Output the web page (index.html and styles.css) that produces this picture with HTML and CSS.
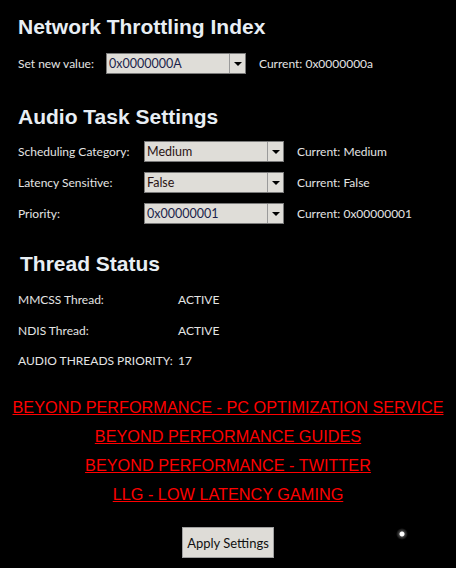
FILE: index.html
```html
<!DOCTYPE html>
<html>
<head>
<meta charset="utf-8">
<link rel="stylesheet" href="styles.css">
</head>
<body>
<div class="panel">
  <h2 class="heading">Network Throttling Index</h2>
  <div class="net-row">
    <span class="label net-label">Set new value:</span>
    <div class="combo"><span class="combo-text">0x0000000A</span><span class="combo-btn"><span class="arrow"></span></span></div>
    <span class="label current">Current: 0x0000000a</span>
  </div>

  <h2 class="heading audio-heading">Audio Task Settings</h2>
  <div class="audio-grid">
    <span class="label">Scheduling Category:</span>
    <div class="combo"><span class="combo-text red">Medium</span><span class="combo-btn"><span class="arrow"></span></span></div>
    <span class="label">Current: Medium</span>

    <span class="label">Latency Sensitive:</span>
    <div class="combo"><span class="combo-text red">False</span><span class="combo-btn"><span class="arrow"></span></span></div>
    <span class="label">Current: False</span>

    <span class="label">Priority:</span>
    <div class="combo"><span class="combo-text">0x00000001</span><span class="combo-btn"><span class="arrow"></span></span></div>
    <span class="label">Current: 0x00000001</span>
  </div>

  <h2 class="heading thread-heading">Thread Status</h2>
  <div class="thread-grid">
    <span class="label">MMCSS Thread:</span><span class="label">ACTIVE</span>
    <span class="label">NDIS Thread:</span><span class="label">ACTIVE</span>
    <span class="label">AUDIO THREADS PRIORITY:</span><span class="label">17</span>
  </div>

  <div class="links">
    <a class="link" href="#">BEYOND PERFORMANCE - PC OPTIMIZATION SERVICE</a>
    <a class="link" href="#">BEYOND PERFORMANCE GUIDES</a>
    <a class="link" href="#">BEYOND PERFORMANCE - TWITTER</a>
    <a class="link" href="#">LLG - LOW LATENCY GAMING</a>
  </div>

  <div class="actions">
    <button class="apply">Apply Settings</button>
  </div>
  <span class="glow"></span>
</div>
</body>
</html>
```

FILE: styles.css
```css
html, body {
  margin: 0;
  padding: 0;
  background: #000;
}
body {
  width: 456px;
  height: 568px;
  overflow: hidden;
}
.panel {
  position: relative;
  height: 568px;
  box-sizing: border-box;
  padding: 15px 0 0 18px;
  font-family: Lato, "Open Sans", sans-serif;
  color: #e6e6e6;
}
.heading {
  margin: 0;
  font-family: "Liberation Sans", Arial, sans-serif;
  font-weight: bold;
  font-size: 21px;
  line-height: 24px;
  color: #e8eef4;
}
.label {
  font-size: 12px;
  line-height: 21px;
  color: #e4e4e4;
  white-space: nowrap;
}
.net-row {
  display: grid;
  grid-template-columns: 75px 140px auto;
  column-gap: 13px;
  align-items: center;
  margin-top: 14px;
  height: 21px;
}
.combo {
  display: flex;
  width: 140px;
  height: 21px;
  box-sizing: border-box;
  background: #dfddd8;
  border: 1px solid #7a7a7a;
}
.combo-text {
  flex: 1;
  font-size: 12.5px;
  line-height: 19px;
  padding-left: 2px;
  color: #1b1f4a;
}
.combo-text.red {
  color: #2a1414;
}
.combo-btn {
  width: 15px;
  border-left: 1px solid #9a9a9a;
  display: flex;
  align-items: center;
  justify-content: center;
}
.arrow {
  width: 0;
  height: 0;
  border-left: 4px solid transparent;
  border-right: 4px solid transparent;
  border-top: 4px solid #000;
}
.audio-heading {
  margin-top: 31px;
}
.audio-grid {
  display: grid;
  grid-template-columns: 113px 140px auto;
  column-gap: 13px;
  row-gap: 10px;
  margin-top: 12px;
  align-items: center;
}
.thread-heading {
  margin-top: 28px;
  margin-left: 2px;
}
.thread-grid {
  display: grid;
  grid-template-columns: 160px auto;
  row-gap: 9.5px;
  margin-top: 13px;
}
.links {
  display: flex;
  flex-direction: column;
  align-items: center;
  margin-left: -18px;
  margin-top: 26px;
  gap: 8px;
}
.link {
  font-family: "Liberation Sans", Arial, sans-serif;
  font-size: 16.25px;
  line-height: 21px;
  color: #ff0000;
  text-decoration: underline;
}
.actions {
  display: flex;
  justify-content: center;
  margin-left: -18px;
  margin-top: 22px;
}
.apply {
  width: 92px;
  height: 31px;
  background: #dedcd7;
  border: 1px solid #a0a0a0;
  font-family: Lato, "Open Sans", sans-serif;
  font-size: 13px;
  color: #111;
  padding: 0;
}
.glow {
  position: absolute;
  left: 396px;
  top: 528px;
  width: 12px;
  height: 12px;
  border-radius: 50%;
  background: radial-gradient(circle, #fff 0, #fff 2px, rgba(255,255,255,0.25) 3px, rgba(255,255,255,0) 6px);
}
```
